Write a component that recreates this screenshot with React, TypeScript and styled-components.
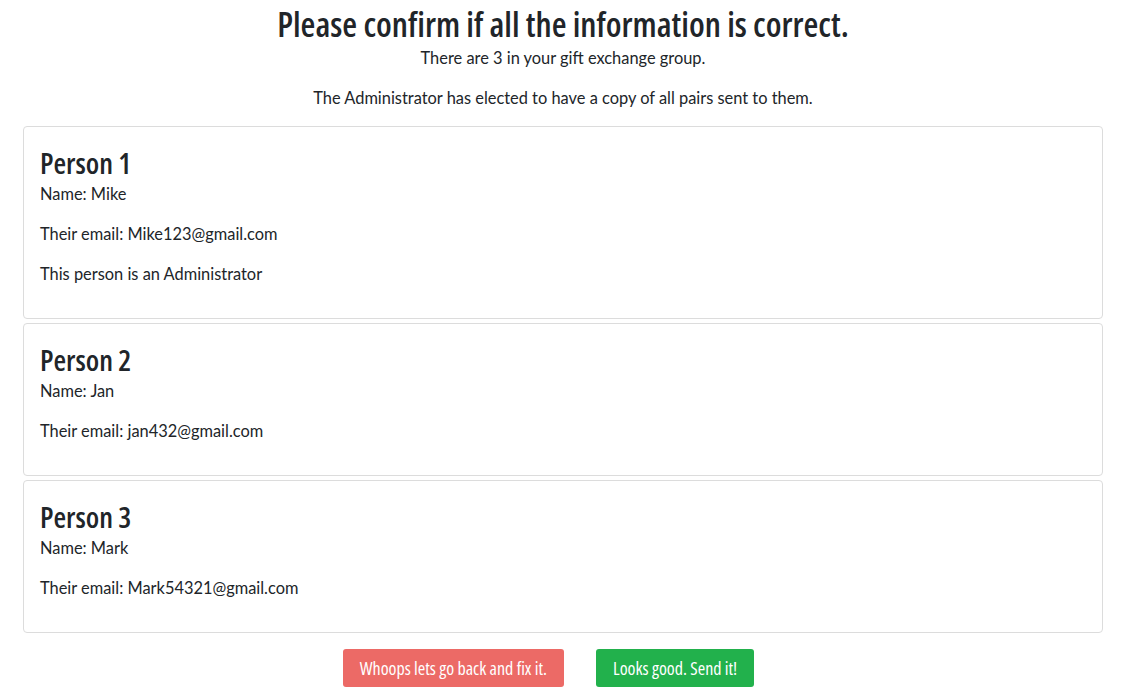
import React from 'react';
import styled, { createGlobalStyle } from 'styled-components';

const GlobalStyle = createGlobalStyle`
	body {
		margin: 0;
		background: #fff;
		color: #212529;
		font-family: Lato, "Noto Sans", sans-serif;
		font-size: 16px;
		line-height: 1.5;
	}
`;

const condensed = `
	font-family: "Open Sans", sans-serif;
	font-stretch: condensed;
`;

const Page = styled.div`
	padding: 0 27px 0 23px;
	display: flex;
	flex-direction: column;
`;

const Title = styled.h1`
	${condensed}
	margin: 3px 0 0;
	text-align: center;
	font-weight: 600;
	font-size: 34px;
	line-height: 43px;
	color: #212529;
`;

const Lead = styled.p`
	margin: 0 0 16px;
	text-align: center;
	font-size: 16.4px;
	line-height: 24px;
`;

const CardList = styled.div`
	display: flex;
	flex-direction: column;
	gap: 4px;
`;

const Card = styled.div`
	border: 1px solid #dcdcdc;
	border-radius: 4px;
	padding: 16px;
`;

const CardTitle = styled.h3`
	${condensed}
	margin: 0;
	font-weight: 600;
	font-size: 29px;
	line-height: 39px;
`;

const Line = styled.p`
	margin: 0 0 16px;
	font-size: 16.4px;
	line-height: 24px;
`;

const Actions = styled.div`
	display: flex;
	justify-content: center;
	gap: 32px;
	margin-top: 16px;
	padding-right: 29px;
`;

const Button = styled.button<{ $tone: 'danger' | 'success' }>`
	${condensed}
	height: 38px;
	padding: 0 17px;
	border: none;
	border-radius: 3px;
	color: #fff;
	font-size: 18px;
	font-weight: 500;
	background: ${({ $tone }) => ($tone === 'danger' ? '#ec6a66' : '#22b14c')};
	cursor: pointer;
`;

const people = [
	{ name: 'Mike', email: 'Mike123@gmail.com', admin: true },
	{ name: 'Jan', email: 'jan432@gmail.com', admin: false },
	{ name: 'Mark', email: 'Mark54321@gmail.com', admin: false }
];

const App = () => (
	<>
		<GlobalStyle />
		<Page>
			<Title>Please confirm if all the information is correct.</Title>
			<Lead>There are {people.length} in your gift exchange group.</Lead>
			<Lead>The Administrator has elected to have a copy of all pairs sent to them.</Lead>
			<CardList>
				{people.map((p, i) => (
					<Card key={p.email}>
						<CardTitle>Person {i + 1}</CardTitle>
						<Line>Name: {p.name}</Line>
						<Line>Their email: {p.email}</Line>
						{p.admin && <Line>This person is an Administrator</Line>}
					</Card>
				))}
			</CardList>
			<Actions>
				<Button $tone='danger'>Whoops lets go back and fix it.</Button>
				<Button $tone='success'>Looks good. Send it!</Button>
			</Actions>
		</Page>
	</>
);

export default App;
